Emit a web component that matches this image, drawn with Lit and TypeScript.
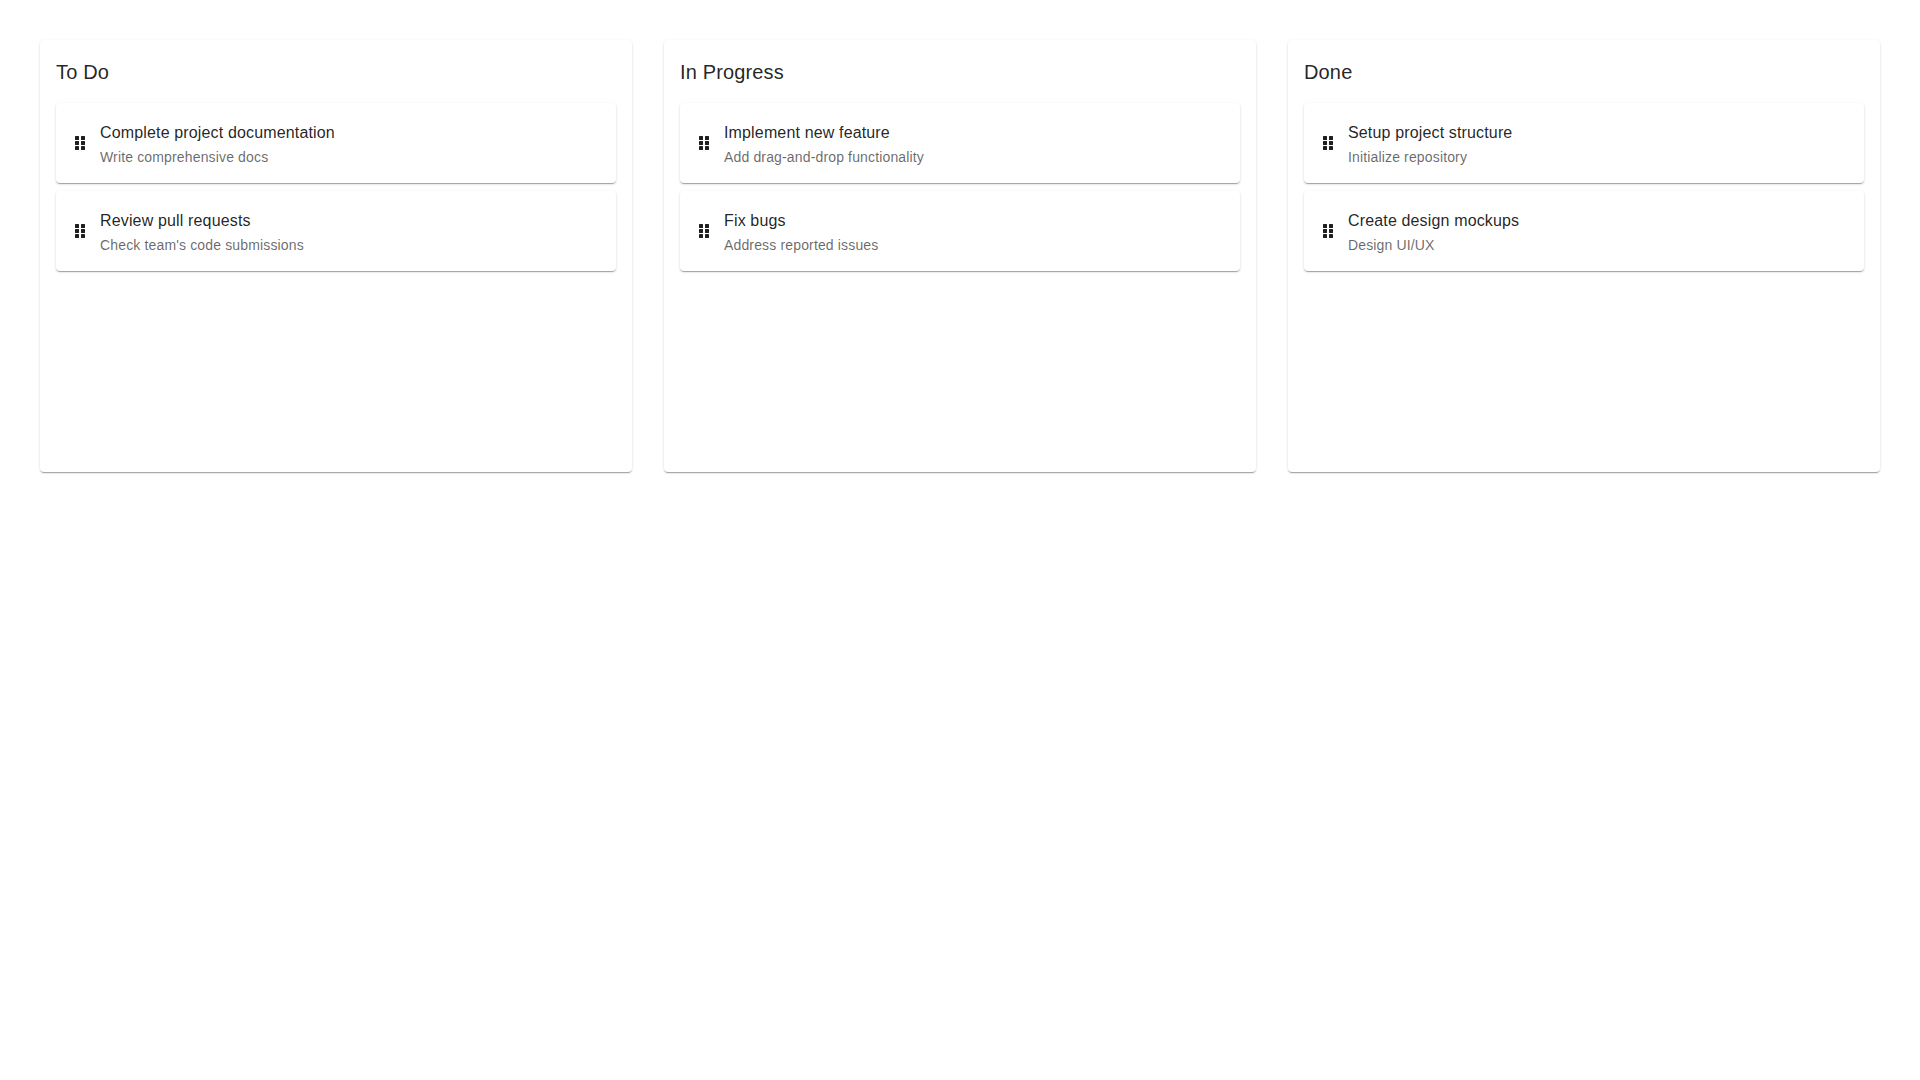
import { LitElement, html, svg, css, unsafeCSS } from 'lit'
import { customElement } from 'lit/decorators.js'

type Task = { title: string; desc: string }
type Column = { name: string; tasks: Task[] }

const columns: Column[] = [
  {
    name: 'To Do',
    tasks: [
      { title: 'Complete project documentation', desc: 'Write comprehensive docs' },
      { title: 'Review pull requests', desc: "Check team's code submissions" },
    ],
  },
  {
    name: 'In Progress',
    tasks: [
      { title: 'Implement new feature', desc: 'Add drag-and-drop functionality' },
      { title: 'Fix bugs', desc: 'Address reported issues' },
    ],
  },
  {
    name: 'Done',
    tasks: [
      { title: 'Setup project structure', desc: 'Initialize repository' },
      { title: 'Create design mockups', desc: 'Design UI/UX' },
    ],
  },
]

const elevation1 = unsafeCSS(
  '0 2px 1px -1px rgba(0,0,0,0.2), 0 1px 1px 0 rgba(0,0,0,0.14), 0 1px 3px 0 rgba(0,0,0,0.12)'
)

@customElement('app-root')
export class AppRoot extends LitElement {
  static styles = css`
    :host {
      display: block;
      font-family: 'Liberation Sans', Arial, sans-serif;
      color: rgba(0, 0, 0, 0.87);
    }
    .board {
      display: grid;
      grid-template-columns: repeat(3, 1fr);
      gap: 32px;
      padding: 40px;
    }
    .column {
      background: #fff;
      border-radius: 4px;
      box-shadow: ${elevation1};
      padding: 16px;
      min-height: 400px;
    }
    .heading {
      margin: 0 0 15px;
      font-size: 20px;
      font-weight: 400;
      line-height: 32px;
      letter-spacing: 0.0075em;
    }
    .list {
      display: flex;
      flex-direction: column;
      gap: 8px;
    }
    .task {
      display: flex;
      align-items: center;
      gap: 8px;
      height: 80px;
      box-sizing: border-box;
      padding: 2px 12px 0;
      background: #fff;
      border-radius: 4px;
      box-shadow: ${elevation1};
    }
    .grip {
      width: 24px;
      height: 24px;
      flex: none;
      display: block;
      fill: #1f1f1f;
    }
    .text {
      display: flex;
      flex-direction: column;
      gap: 2px;
    }
    .title {
      font-size: 16px;
      line-height: 24px;
      letter-spacing: 0.00938em;
    }
    .desc {
      font-size: 14px;
      line-height: 20px;
      letter-spacing: 0.01071em;
      color: rgba(0, 0, 0, 0.6);
    }
  `

  private grip() {
    const xs = [7, 13]
    const ys = [4, 9, 14]
    return html`<svg class="grip" viewBox="0 0 24 24" aria-hidden="true">
      ${xs.map((x) =>
        ys.map(
          (y) => svg`<rect x=${x} y=${y} width="4" height="4" rx="0.5"></rect>`
        )
      )}
    </svg>`
  }

  render() {
    return html`
      <div class="board">
        ${columns.map(
          (col) => html`
            <section class="column">
              <h6 class="heading">${col.name}</h6>
              <div class="list">
                ${col.tasks.map(
                  (t) => html`
                    <div class="task">
                      ${this.grip()}
                      <div class="text">
                        <div class="title">${t.title}</div>
                        <div class="desc">${t.desc}</div>
                      </div>
                    </div>
                  `
                )}
              </div>
            </section>
          `
        )}
      </div>
    `
  }
}
